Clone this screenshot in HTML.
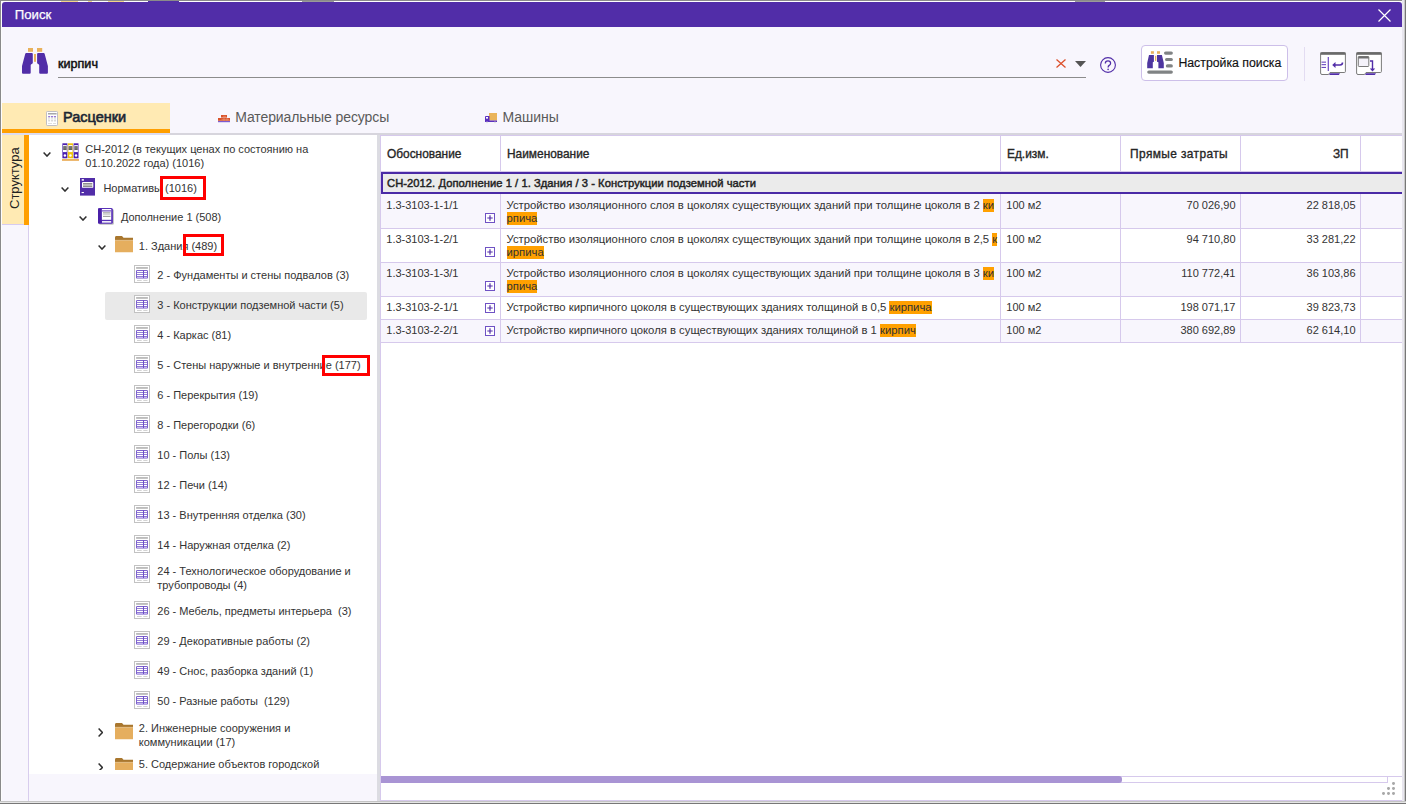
<!DOCTYPE html>
<html><head><meta charset="utf-8">
<style>
*{box-sizing:border-box;margin:0;padding:0}
html,body{width:1406px;height:804px;overflow:hidden}
body{position:relative;background:#fdfdfd;font-family:"Liberation Sans",sans-serif;color:#222}
.a{position:absolute}
.t{position:absolute;white-space:nowrap;line-height:1}
svg{position:absolute;overflow:visible}
.tr{font-size:11px;color:#333}
.hd{font-size:11.9px;font-weight:normal;color:#262626;-webkit-text-stroke:0.35px #262626}
.cd{font-size:11px;color:#333}
.hl{background:#ffa000;padding-bottom:1px}
.rb{position:absolute;border:3px solid #ff0000}
.vl{position:absolute;width:1px;background:#d6c9ec}
</style></head><body>
<svg width="0" height="0" style="position:absolute">
<defs>
<symbol id="chev" viewBox="0 0 8 5"><path d="M0.6 0.6 L4 4.1 L7.4 0.6" fill="none" stroke="#2f2f2f" stroke-width="1.5"/></symbol>
<symbol id="chevr" viewBox="0 0 5 9"><path d="M0.6 0.6 L4.4 4.5 L0.6 8.4" fill="none" stroke="#2f2f2f" stroke-width="1.5"/></symbol>
<symbol id="leaf" viewBox="0 0 16 18">
 <rect x="0.5" y="0.5" width="15" height="17" fill="#fff" stroke="#c2c2c2"/>
 <rect x="2.1" y="2.2" width="11.8" height="1.5" fill="#ababab"/>
 <rect x="2.1" y="5" width="11.8" height="8.6" rx="1.2" fill="#6f50c8"/>
 <rect x="3" y="5.9" width="6" height="1.3" fill="#fff"/><rect x="10" y="5.9" width="3" height="1.3" fill="#fff"/>
 <rect x="3" y="7.9" width="6" height="1.3" fill="#fff"/><rect x="10" y="7.9" width="3" height="1.3" fill="#fff"/>
 <rect x="3" y="9.9" width="6" height="1.3" fill="#fff"/><rect x="10" y="9.9" width="3" height="1.3" fill="#fff"/>
 <rect x="3" y="11.9" width="6" height="1" fill="#cdbff0"/><rect x="10" y="11.9" width="3" height="1" fill="#cdbff0"/>
 <path d="M3 15.5H7.7M9.3 15.5H13.5" stroke="#c8c8c8" stroke-width="0.8"/>
</symbol>
<symbol id="folder" viewBox="0 0 18 17" preserveAspectRatio="none">
 <path d="M0 1.5 Q0 0 1.5 0 H7 L8.5 1.8 H18 V5 H0Z" fill="#a9772e"/>
 <rect x="0" y="4" width="18" height="1" fill="#e9c58e"/>
 <rect x="0" y="5" width="18" height="12" fill="#e5ae5e"/>
</symbol>
</defs></svg>

<div class="a" style="left:0;top:0;width:1406px;height:1px;background:#8a8a8a"></div>
<div class="a" style="left:0;top:0;width:1px;height:804px;background:#8a8a8a"></div>
<div class="a" style="left:2px;top:2px;width:1400px;height:799px;background:#f8f6fd"></div>
<div class="a" style="left:1402px;top:0;width:2px;height:804px;background:#e8e6ee"></div>
<div class="a" style="left:1404px;top:0;width:1px;height:804px;background:#c8c8c8"></div>
<div class="a" style="left:1405px;top:0;width:1px;height:804px;background:#777"></div>
<div class="a" style="left:0;top:801px;width:1406px;height:1px;background:#c4c4c4"></div>
<div class="a" style="left:0;top:802px;width:1406px;height:1px;background:#e6e6e6"></div>
<div class="a" style="left:0;top:803px;width:1406px;height:1px;background:#777"></div>
<div class="a" style="left:2px;top:1px;width:1400px;height:1px;background:#fff"></div>
<div class="a" style="left:61px;top:1px;width:17px;height:1px;background:#f2d38a"></div>
<div class="a" style="left:108px;top:1px;width:16px;height:1px;background:#f2d38a"></div>
<div class="a" style="left:148px;top:1px;width:31px;height:1px;background:#512da8"></div>
<div class="a" style="left:88px;top:1px;width:4px;height:1px;background:#f2d38a"></div>
<div class="a" style="left:302px;top:1px;width:32px;height:1px;background:#9a9a9a"></div>
<div class="a" style="left:1075px;top:1px;width:30px;height:1px;background:#9a9a9a"></div>
<div class="a" style="left:2px;top:2px;width:1400px;height:25px;background:#512da8;border-radius:3px 3px 0 0"></div>
<div class="t" style="left:14.8px;top:8px;font-size:13.2px;color:#fff;-webkit-text-stroke:0.25px #fff">Поиск</div>
<svg style="left:1378px;top:9px" width="13" height="13"><path d="M0.5 0.5L12.5 12.5M12.5 0.5L0.5 12.5" stroke="#fff" stroke-width="1.2"/></svg>
<svg style="left:22px;top:48px" width="26" height="26" viewBox="0 0 26 26">
<rect x="6" y="0" width="5" height="3.8" fill="#e8b15c"/><rect x="15" y="0" width="5.2" height="3.8" fill="#e8b15c"/>
<rect x="12" y="6" width="2" height="7.8" fill="#e8b15c"/>
<path d="M4.2 5.1 H9.8 Q10.8 5.1 10.8 6.1 V14.8 Q10.8 15.8 9.8 16 Q8.7 16.3 8.7 17.3 V24.7 Q8.7 25.7 7.7 25.7 H1 Q0 25.7 0 24.7 V18 L3.2 6 Q3.4 5.1 4.2 5.1Z" fill="#512da8"/>
<path d="M21.7 5.1 H16.1 Q15.1 5.1 15.1 6.1 V14.8 Q15.1 15.8 16.1 16 Q17.2 16.3 17.2 17.3 V24.7 Q17.2 25.7 18.2 25.7 H24.9 Q25.9 25.7 25.9 24.7 V18 L22.7 6 Q22.5 5.1 21.7 5.1Z" fill="#512da8"/>
</svg>
<div class="t" style="left:58px;top:58.0px;font-size:12.6px;color:#111;-webkit-text-stroke:0.5px #111">кирпич</div>
<div class="a" style="left:58px;top:77px;width:1028px;height:1px;background:#8c8c8c"></div>
<svg style="left:1056px;top:58.5px" width="10" height="9"><path d="M0.5 0.5L9.5 8.5M9.5 0.5L0.5 8.5" stroke="#dc4f2a" stroke-width="1.3"/></svg>
<svg style="left:1075px;top:61px" width="11" height="6"><path d="M0 0H11L5.5 6Z" fill="#555"/></svg>
<svg style="left:1100px;top:57px" width="16" height="16"><circle cx="8" cy="8" r="7.4" fill="none" stroke="#512da8" stroke-width="1.1"/><path d="M5.3 6.4 Q5.3 3.9 8 3.9 Q10.6 3.9 10.6 6.2 Q10.6 7.5 9.2 8.4 Q8.1 9.1 8.1 10.6" fill="none" stroke="#512da8" stroke-width="1.25"/><circle cx="8.1" cy="12.4" r="0.8" fill="#512da8"/></svg>
<div class="a" style="left:1141px;top:45px;width:147px;height:36px;background:#fff;border:1px solid #cdbfe9;border-radius:4px"></div>
<svg style="left:1147px;top:51px" width="26" height="23" viewBox="0 0 26 23">
<rect x="3.9" y="0.2" width="3" height="2.6" fill="#e8b15c"/><rect x="10" y="0.2" width="3" height="2.6" fill="#e8b15c"/>
<rect x="8" y="4.8" width="1.3" height="5.1" fill="#e8b15c"/>
<path d="M2 3.9 H6.9 V10.8 L5.8 11.3 V17.3 H0.2 V12Z" fill="#4e369f"/>
<path d="M10 3.9 H14.9 L16.8 12 V17.3 H11.4 V11.3 L10 10.8Z" fill="#4e369f"/>
<rect x="17" y="0.5" width="8.9" height="3.2" rx="1.6" fill="#808384"/>
<rect x="18" y="6.9" width="7.9" height="3.1" rx="1.55" fill="#808384"/>
<rect x="18.8" y="13.2" width="7.1" height="3.4" rx="1.7" fill="#808384"/>
<rect x="0.2" y="19.4" width="25.7" height="3.3" rx="1.65" fill="#808384"/>
</svg>
<div class="t" style="left:1178.4px;top:56.8px;font-size:12.3px;color:#111;-webkit-text-stroke:0.15px #111">Настройка поиска</div>
<div class="a" style="left:1304px;top:47px;width:1px;height:34px;background:#e3dcf2"></div>
<svg style="left:1320px;top:52px" width="26" height="24" viewBox="0 0 26 24">
<path d="M0.6 1.5 Q0.6 0.5 1.6 0.5 H24.4 Q25.4 0.5 25.4 1.5 V19.5 Q25.4 20.5 24.4 20.5 H10 L8.5 22.5 H2 Q0.6 22.5 0.6 21 Z" fill="#fff" stroke="#7a7a7a" stroke-width="1"/>
<rect x="0.5" y="0.5" width="25" height="2.3" fill="#6a6a6a"/>
<path d="M10 21.3 H20 L18.8 23 H9.2Z" fill="#512da8"/>
<rect x="1.5" y="9.6" width="4.5" height="1.1" fill="#6a48c0"/><rect x="1.5" y="12.1" width="4.5" height="1.1" fill="#6a48c0"/><rect x="1.5" y="14.9" width="4.5" height="1.1" fill="#6a48c0"/><path d="M8.3 5V19" stroke="#6a48c0" stroke-width="1.2"/><path d="M22.5 10.5 Q22.5 13 20 13 H14" fill="none" stroke="#512da8" stroke-width="1.6"/><path d="M12.2 13 L15.5 10 V16Z" fill="#512da8"/></svg>
<svg style="left:1356px;top:52px" width="26" height="24" viewBox="0 0 26 24">
<path d="M0.6 1.5 Q0.6 0.5 1.6 0.5 H24.4 Q25.4 0.5 25.4 1.5 V19.5 Q25.4 20.5 24.4 20.5 H10 L8.5 22.5 H2 Q0.6 22.5 0.6 21 Z" fill="#fff" stroke="#7a7a7a" stroke-width="1"/>
<rect x="0.5" y="0.5" width="25" height="2.3" fill="#6a6a6a"/>
<path d="M10 21.3 H20 L18.8 23 H9.2Z" fill="#512da8"/>
<rect x="2.3" y="4.5" width="10.5" height="10" rx="0.8" fill="#f4f2fa" stroke="#7a7a7a" stroke-width="1"/><rect x="2.3" y="4.5" width="10.5" height="2" fill="#6f6f6f"/><path d="M14 9 H16.5 V17.5" fill="none" stroke="#512da8" stroke-width="1.4"/><path d="M13.8 16.5 H19.2 L16.5 19.5Z" fill="#512da8"/></svg>
<div class="a" style="left:2px;top:103px;width:168px;height:26px;background:#ffeab3"></div>
<div class="a" style="left:2px;top:129px;width:168px;height:4px;background:#ff9f00"></div>
<div class="a" style="left:2px;top:133px;width:1400px;height:2px;background:#d7d5dd"></div>
<div class="a" style="left:2px;top:133px;width:168px;height:2px;background:#dcdcf0"></div>
<svg style="left:46px;top:111px" width="12" height="15" viewBox="0 0 12 15">
<rect x="0.5" y="0.5" width="11" height="14" rx="0.8" fill="#fff" stroke="#b9b9c2" stroke-width="0.9"/>
<rect x="2" y="2" width="8.6" height="1.5" fill="#a8a8a8"/>
<rect x="2.2" y="5" width="1.9" height="5.5" fill="#d9d9d9"/><rect x="5" y="5" width="2" height="5.5" fill="#d9d9d9"/><rect x="7.9" y="5" width="2.1" height="5.5" fill="#d9d9d9"/>
<rect x="2.2" y="5" width="1.9" height="1.1" fill="#9a78dc"/><rect x="5" y="5" width="2" height="1.1" fill="#9a78dc"/><rect x="7.9" y="5" width="2.1" height="1.1" fill="#9a78dc"/>
<rect x="2.7" y="7.3" width="0.9" height="1.6" fill="#fff"/><rect x="5.4" y="7.3" width="1.2" height="1.6" fill="#fff"/><rect x="8.4" y="7.3" width="1.1" height="1.6" fill="#fff"/>
<path d="M2 12.5H6M7 12.5H10" stroke="#d0d0d0" stroke-width="0.7"/>
</svg>
<div class="t" style="left:63px;top:110.1px;font-size:14.5px;color:#1b2634;-webkit-text-stroke:0.6px #1b2634">Расценки</div>
<svg style="left:218px;top:115px" width="12" height="7" viewBox="0 0 12 7">
<rect x="3" y="0" width="6" height="2.6" fill="#d9532b"/>
<rect x="0" y="3" width="12" height="2.8" fill="#d9532b"/>
<path d="M3.5 4.4H11M6 3V5.8M9 3V5.8M5 1.3H8" stroke="#f0a080" stroke-width="0.5"/>
<rect x="0" y="6" width="12" height="1.2" fill="#7d5cd0"/>
</svg>
<div class="t" style="left:235.2px;top:109.6px;font-size:14px;color:#5a5a5a;letter-spacing:-0.1px">Материальные ресурсы</div>
<svg style="left:485px;top:113px" width="12" height="10" viewBox="0 0 12 10">
<rect x="4" y="0" width="8" height="7.5" fill="#eab45a"/>
<path d="M0 4 Q0 3 1 3 H4.5 V8.5 H0Z" fill="#5a2fc0"/>
<rect x="1" y="4" width="2" height="1.6" fill="#fff"/>
<rect x="0" y="7.5" width="12" height="1.5" fill="#5a2fc0"/>
<circle cx="2" cy="9.3" r="0.9" fill="#ddd"/><circle cx="10" cy="9.3" r="0.9" fill="#ddd"/>
</svg>
<div class="t" style="left:502.4px;top:109.6px;font-size:14px;color:#5a5a5a">Машины</div>
<div class="a" style="left:2px;top:135px;width:22px;height:89px;background:#ffeab3"></div>
<div class="a" style="left:24px;top:135px;width:5px;height:90px;background:#ff9f00"></div>
<div class="a" style="left:2px;top:224px;width:22px;height:1px;background:#d6cbf0"></div>
<div class="t" style="left:7.8px;top:208.5px;font-size:13px;color:#222;transform:rotate(-90deg);transform-origin:0 0">Структура</div>
<div class="a" style="left:28px;top:225px;width:1px;height:576px;background:#d8cdee"></div>
<div class="a" style="left:29px;top:135px;width:348px;height:639px;background:#fff"></div>
<div class="a" style="left:29px;top:135px;width:348px;height:635px;overflow:hidden" id="tree">
<div class="a" style="left:76px;top:157px;width:262px;height:28px;background:#e9e9e9;border-radius:2px"></div>
<svg style="left:14.2px;top:17.2px" width="8" height="5"><use href="#chev"/></svg>
<svg style="left:32.6px;top:7.7px" width="17" height="18" viewBox="0 0 17 18">
<rect x="0.4" y="0.3" width="5.0" height="15" fill="#4a1fb0"/>
<rect x="1.0" y="2.1" width="3.8" height="7" fill="#fff"/>
<rect x="1.2" y="3.2" width="3.4" height="3.8" fill="#555"/>
<path d="M1.2 4.4H4.6M1.2 5.8H4.6" stroke="#9a9a9a" stroke-width="0.5"/>
<circle cx="2.90" cy="12.6" r="1.25" fill="#fff"/>
<rect x="5.8" y="0.3" width="5.3" height="15" fill="#eec20e"/>
<rect x="6.4" y="2.1" width="4.1" height="7" fill="#fff"/>
<rect x="6.6" y="3.2" width="3.7" height="3.8" fill="#555"/>
<path d="M6.6 4.4H10.3M6.6 5.8H10.3" stroke="#9a9a9a" stroke-width="0.5"/>
<circle cx="8.45" cy="12.6" r="1.25" fill="#fff"/>
<rect x="11.6" y="0.3" width="4.9" height="15" fill="#4a1fb0"/>
<rect x="12.2" y="2.1" width="3.7" height="7" fill="#fff"/>
<rect x="12.4" y="3.2" width="3.3" height="3.8" fill="#555"/>
<path d="M12.4 4.4H15.7M12.4 5.8H15.7" stroke="#9a9a9a" stroke-width="0.5"/>
<circle cx="14.05" cy="12.6" r="1.25" fill="#fff"/>
<rect x="0" y="16" width="17" height="1.9" fill="#ebb262"/>
</svg>
<div class="t tr" style="left:56.3px;top:9.1px">СН-2012 (в текущих ценах по состоянию на</div>
<div class="t tr" style="left:56.3px;top:22.9px">01.10.2022 года) (1016)</div>
<svg style="left:32.4px;top:52.0px" width="8" height="5"><use href="#chev"/></svg>
<svg style="left:51.1px;top:43px" width="15" height="18" viewBox="0 0 15 18">
<rect x="0" y="0" width="15" height="17.6" fill="#512da8"/>
<rect x="2" y="4.1" width="11.3" height="5.7" rx="0.9" fill="#fff"/>
<rect x="3" y="5" width="9.3" height="1.6" fill="#8f8f8f"/><rect x="3" y="7.4" width="9.3" height="1.6" fill="#8f8f8f"/>
<rect x="1.7" y="1" width="2.2" height="1.8" fill="#e8e2f6"/><rect x="1.6" y="14" width="2.3" height="1.1" fill="#fff"/>
</svg>
<div class="t tr" style="left:74.4px;top:48.0px">Нормативы (1016)</div>
<svg style="left:50.4px;top:80.8px" width="8" height="5"><use href="#chev"/></svg>
<svg style="left:69px;top:72.9px" width="16" height="17" viewBox="0 0 16 17">
<rect x="1" y="1" width="14.9" height="15.8" rx="1.5" fill="#8a8a8a" opacity="0.55"/>
<rect x="0" y="0" width="14.9" height="15.8" rx="1.5" fill="#5a33b8"/>
<rect x="0" y="0.5" width="3.6" height="14.8" fill="#4a20a8"/>
<rect x="3.9" y="1" width="9.3" height="10.8" fill="#fff"/>
<rect x="3.9" y="2.1" width="9.3" height="1.5" fill="#8f74d0"/>
<rect x="5" y="4.4" width="7.5" height="1" fill="#8a8a8a"/>
<rect x="5" y="6.3" width="7.5" height="0.8" fill="#c4c4c4"/>
<rect x="5" y="7.9" width="7.5" height="0.9" fill="#8a8a8a"/>
<rect x="4" y="13.1" width="9.2" height="1.5" fill="#fff"/>
</svg>
<div class="t tr" style="left:91.9px;top:76.6px">Дополнение 1 (508)</div>
<svg style="left:68.6px;top:109.8px" width="8" height="5"><use href="#chev"/></svg>
<svg style="left:86.0px;top:101.0px" width="18" height="16.5"><use href="#folder"/></svg>
<div class="t tr" style="left:109.8px;top:105.7px">1. Здания (489)</div>
<svg style="left:105.3px;top:130.0px" width="16" height="18"><use href="#leaf"/></svg>
<div class="t tr" style="left:128.3px;top:135.1px">2 - Фундаменты и стены подвалов (3)</div>
<svg style="left:105.3px;top:160.0px" width="16" height="18"><use href="#leaf"/></svg>
<div class="t tr" style="left:128.3px;top:165.0px">3 - Конструкции подземной части (5)</div>
<svg style="left:105.3px;top:190.0px" width="16" height="18"><use href="#leaf"/></svg>
<div class="t tr" style="left:128.3px;top:195.0px">4 - Каркас (81)</div>
<svg style="left:105.3px;top:220.0px" width="16" height="18"><use href="#leaf"/></svg>
<div class="t tr" style="left:128.3px;top:225.0px">5 - Стены наружные и внутренние (177)</div>
<svg style="left:105.3px;top:250.0px" width="16" height="18"><use href="#leaf"/></svg>
<div class="t tr" style="left:128.3px;top:255.0px">6 - Перекрытия (19)</div>
<svg style="left:105.3px;top:280.0px" width="16" height="18"><use href="#leaf"/></svg>
<div class="t tr" style="left:128.3px;top:285.0px">8 - Перегородки (6)</div>
<svg style="left:105.3px;top:310.0px" width="16" height="18"><use href="#leaf"/></svg>
<div class="t tr" style="left:128.3px;top:315.0px">10 - Полы (13)</div>
<svg style="left:105.3px;top:340.0px" width="16" height="18"><use href="#leaf"/></svg>
<div class="t tr" style="left:128.3px;top:345.0px">12 - Печи (14)</div>
<svg style="left:105.3px;top:370.0px" width="16" height="18"><use href="#leaf"/></svg>
<div class="t tr" style="left:128.3px;top:375.0px">13 - Внутренняя отделка (30)</div>
<svg style="left:105.3px;top:400.0px" width="16" height="18"><use href="#leaf"/></svg>
<div class="t tr" style="left:128.3px;top:405.0px">14 - Наружная отделка (2)</div>
<svg style="left:105.3px;top:430.0px" width="16" height="18"><use href="#leaf"/></svg>
<div class="t tr" style="left:128.3px;top:431.0px">24 - Технологическое оборудование и</div>
<svg style="left:105.3px;top:466.0px" width="16" height="18"><use href="#leaf"/></svg>
<div class="t tr" style="left:128.3px;top:471.0px">26 - Мебель, предметы интерьера&nbsp; (3)</div>
<svg style="left:105.3px;top:496.0px" width="16" height="18"><use href="#leaf"/></svg>
<div class="t tr" style="left:128.3px;top:501.0px">29 - Декоративные работы (2)</div>
<svg style="left:105.3px;top:526.0px" width="16" height="18"><use href="#leaf"/></svg>
<div class="t tr" style="left:128.3px;top:531.0px">49 - Снос, разборка зданий (1)</div>
<svg style="left:105.3px;top:556.0px" width="16" height="18"><use href="#leaf"/></svg>
<div class="t tr" style="left:128.3px;top:561.0px">50 - Разные работы&nbsp; (129)</div>
<div class="t tr" style="left:128.3px;top:445.0px">трубопроводы (4)</div>
<svg style="left:68.8px;top:593.2px" width="5" height="9"><use href="#chevr"/></svg>
<svg style="left:86.0px;top:587.5px" width="18" height="16.5"><use href="#folder"/></svg>
<div class="t tr" style="left:109.8px;top:587.7px">2. Инженерные сооружения и</div>
<div class="t tr" style="left:109.8px;top:601.7px">коммуникации (17)</div>
<svg style="left:68.8px;top:628.3px" width="5" height="9"><use href="#chevr"/></svg>
<svg style="left:86.0px;top:623.4px" width="18" height="16.5"><use href="#folder"/></svg>
<div class="t tr" style="left:109.8px;top:623.7px">5. Содержание объектов городской</div>
</div>
<div class="rb" style="left:160.3px;top:176.3px;width:46.1px;height:23.9px"></div>
<div class="rb" style="left:183.4px;top:234.4px;width:41px;height:21.9px"></div>
<div class="rb" style="left:321.5px;top:354.5px;width:48.9px;height:21.5px"></div>
<div class="a" style="left:377px;top:135px;width:3px;height:666px;background:#dcdce2"></div>
<div class="a" style="left:380px;top:135px;width:1022px;height:666px;background:#fff;border-left:1px solid #d6c9ec;border-top:1px solid #d6c9ec;border-bottom:1px solid #d6c9ec"></div>
<div class="a" style="left:381px;top:171px;width:1021px;height:1px;background:#d6c9ec"></div>
<div class="vl" style="left:500px;top:136px;height:35px"></div>
<div class="vl" style="left:1000px;top:136px;height:35px"></div>
<div class="vl" style="left:1120px;top:136px;height:35px"></div>
<div class="vl" style="left:1240px;top:136px;height:35px"></div>
<div class="vl" style="left:1360px;top:136px;height:35px"></div>
<div class="t hd" style="left:387px;top:148.9px">Обоснование</div>
<div class="t hd" style="left:507px;top:148.9px">Наименование</div>
<div class="t hd" style="left:1007px;top:148.9px">Ед.изм.</div>
<div class="t hd" style="right:178px;top:148.9px"><span style="letter-spacing:0.4px">Прямые затраты</span></div>
<div class="t hd" style="right:57.40000000000009px;top:148.9px">ЗП</div>
<div class="a" style="left:381px;top:172px;width:1021px;height:22px;background:#ebebeb;border:2px solid #4a2aa6;border-right:none"></div>
<div class="t" style="left:387px;top:177.8px;font-size:11.2px;color:#1f1f1f;-webkit-text-stroke:0.45px #1f1f1f;letter-spacing:0.05px">СН-2012. Дополнение 1 / 1. Здания / 3 - Конструкции подземной части</div>
<div class="a" style="left:381px;top:194px;width:1021px;height:34px;background:#f8f6fd"></div>
<div class="vl" style="left:500px;top:194px;height:34px"></div>
<div class="vl" style="left:1000px;top:194px;height:34px"></div>
<div class="vl" style="left:1120px;top:194px;height:34px"></div>
<div class="vl" style="left:1240px;top:194px;height:34px"></div>
<div class="vl" style="left:1360px;top:194px;height:34px"></div>
<div class="t cd" style="left:386.3px;top:200.0px">1.3-3103-1-1/1</div>
<svg style="left:485px;top:212.5px" width="10" height="10"><rect x="0.5" y="0.5" width="9" height="9" fill="#fff" stroke="#6f52c4"/><path d="M2.3 5H7.7M5 2.3V7.7" stroke="#512da8" stroke-width="1.2"/></svg>
<div class="t cd" style="left:506.5px;top:200.0px;font-size:11.3px">Устройство изоляционного слоя в цоколях существующих зданий при толщине цоколя в 2 <span class="hl">ки</span></div>
<div class="t cd" style="left:506.5px;top:213.3px;font-size:11.3px"><span class="hl">рпича</span></div>
<div class="t cd" style="left:1006.3px;top:200.0px">100 м2</div>
<div class="t cd" style="right:170.5px;top:200.0px">70 026,90</div>
<div class="t cd" style="right:50.5px;top:200.0px">22 818,05</div>
<div class="a" style="left:381px;top:228px;width:1021px;height:34px;background:#fff"></div>
<div class="vl" style="left:500px;top:228px;height:34px"></div>
<div class="vl" style="left:1000px;top:228px;height:34px"></div>
<div class="vl" style="left:1120px;top:228px;height:34px"></div>
<div class="vl" style="left:1240px;top:228px;height:34px"></div>
<div class="vl" style="left:1360px;top:228px;height:34px"></div>
<div class="t cd" style="left:386.3px;top:234.0px">1.3-3103-1-2/1</div>
<svg style="left:485px;top:246.5px" width="10" height="10"><rect x="0.5" y="0.5" width="9" height="9" fill="#fff" stroke="#6f52c4"/><path d="M2.3 5H7.7M5 2.3V7.7" stroke="#512da8" stroke-width="1.2"/></svg>
<div class="t cd" style="left:506.5px;top:234.0px;font-size:11.3px">Устройство изоляционного слоя в цоколях существующих зданий при толщине цоколя в 2,5 <span class="hl">к</span></div>
<div class="t cd" style="left:506.5px;top:247.3px;font-size:11.3px"><span class="hl">ирпича</span></div>
<div class="t cd" style="left:1006.3px;top:234.0px">100 м2</div>
<div class="t cd" style="right:170.5px;top:234.0px">94 710,80</div>
<div class="t cd" style="right:50.5px;top:234.0px">33 281,22</div>
<div class="a" style="left:381px;top:262px;width:1021px;height:34px;background:#f8f6fd"></div>
<div class="vl" style="left:500px;top:262px;height:34px"></div>
<div class="vl" style="left:1000px;top:262px;height:34px"></div>
<div class="vl" style="left:1120px;top:262px;height:34px"></div>
<div class="vl" style="left:1240px;top:262px;height:34px"></div>
<div class="vl" style="left:1360px;top:262px;height:34px"></div>
<div class="t cd" style="left:386.3px;top:268.0px">1.3-3103-1-3/1</div>
<svg style="left:485px;top:280.5px" width="10" height="10"><rect x="0.5" y="0.5" width="9" height="9" fill="#fff" stroke="#6f52c4"/><path d="M2.3 5H7.7M5 2.3V7.7" stroke="#512da8" stroke-width="1.2"/></svg>
<div class="t cd" style="left:506.5px;top:268.0px;font-size:11.3px">Устройство изоляционного слоя в цоколях существующих зданий при толщине цоколя в 3 <span class="hl">ки</span></div>
<div class="t cd" style="left:506.5px;top:281.3px;font-size:11.3px"><span class="hl">рпича</span></div>
<div class="t cd" style="left:1006.3px;top:268.0px">100 м2</div>
<div class="t cd" style="right:170.5px;top:268.0px">110 772,41</div>
<div class="t cd" style="right:50.5px;top:268.0px">36 103,86</div>
<div class="a" style="left:381px;top:296px;width:1021px;height:23px;background:#fff"></div>
<div class="vl" style="left:500px;top:296px;height:23px"></div>
<div class="vl" style="left:1000px;top:296px;height:23px"></div>
<div class="vl" style="left:1120px;top:296px;height:23px"></div>
<div class="vl" style="left:1240px;top:296px;height:23px"></div>
<div class="vl" style="left:1360px;top:296px;height:23px"></div>
<div class="t cd" style="left:386.3px;top:302.0px">1.3-3103-2-1/1</div>
<svg style="left:485px;top:303px" width="10" height="10"><rect x="0.5" y="0.5" width="9" height="9" fill="#fff" stroke="#6f52c4"/><path d="M2.3 5H7.7M5 2.3V7.7" stroke="#512da8" stroke-width="1.2"/></svg>
<div class="t cd" style="left:506.5px;top:302.0px;font-size:11.3px">Устройство кирпичного цоколя в существующих зданиях толщиной в 0,5 <span class="hl">кирпича</span></div>
<div class="t cd" style="left:1006.3px;top:302.0px">100 м2</div>
<div class="t cd" style="right:170.5px;top:302.0px">198 071,17</div>
<div class="t cd" style="right:50.5px;top:302.0px">39 823,73</div>
<div class="a" style="left:381px;top:319px;width:1021px;height:23px;background:#f8f6fd"></div>
<div class="vl" style="left:500px;top:319px;height:23px"></div>
<div class="vl" style="left:1000px;top:319px;height:23px"></div>
<div class="vl" style="left:1120px;top:319px;height:23px"></div>
<div class="vl" style="left:1240px;top:319px;height:23px"></div>
<div class="vl" style="left:1360px;top:319px;height:23px"></div>
<div class="t cd" style="left:386.3px;top:325.0px">1.3-3103-2-2/1</div>
<svg style="left:485px;top:326px" width="10" height="10"><rect x="0.5" y="0.5" width="9" height="9" fill="#fff" stroke="#6f52c4"/><path d="M2.3 5H7.7M5 2.3V7.7" stroke="#512da8" stroke-width="1.2"/></svg>
<div class="t cd" style="left:506.5px;top:325.0px;font-size:11.3px">Устройство кирпичного цоколя в существующих зданиях толщиной в 1 <span class="hl">кирпич</span></div>
<div class="t cd" style="left:1006.3px;top:325.0px">100 м2</div>
<div class="t cd" style="right:170.5px;top:325.0px">380 692,89</div>
<div class="t cd" style="right:50.5px;top:325.0px">62 614,10</div>
<div class="a" style="left:381px;top:228px;width:1021px;height:1px;background:#d6c9ec"></div>
<div class="a" style="left:381px;top:262px;width:1021px;height:1px;background:#d6c9ec"></div>
<div class="a" style="left:381px;top:296px;width:1021px;height:1px;background:#d6c9ec"></div>
<div class="a" style="left:381px;top:319px;width:1021px;height:1px;background:#d6c9ec"></div>
<div class="a" style="left:381px;top:342px;width:1021px;height:1px;background:#d6c9ec"></div>
<div class="a" style="left:381px;top:776px;width:1021px;height:1px;background:#d6c9ec"></div>
<div class="a" style="left:381px;top:776px;width:1007px;height:7px;border:1px solid #d6c9ec;border-top:none;border-left:none"></div>
<div class="a" style="left:381px;top:776px;width:741px;height:6.5px;background:#a994d4;border-radius:0 3px 3px 0"></div>
<div class="a" style="left:1392.0px;top:782.1px;width:2.8px;height:2.8px;border-radius:50%;background:#a8a8a8"></div>
<div class="a" style="left:1387.0px;top:787.1px;width:2.8px;height:2.8px;border-radius:50%;background:#a8a8a8"></div>
<div class="a" style="left:1392.0px;top:787.1px;width:2.8px;height:2.8px;border-radius:50%;background:#a8a8a8"></div>
<div class="a" style="left:1382.0px;top:792.1px;width:2.8px;height:2.8px;border-radius:50%;background:#a8a8a8"></div>
<div class="a" style="left:1387.0px;top:792.1px;width:2.8px;height:2.8px;border-radius:50%;background:#a8a8a8"></div>
<div class="a" style="left:1392.0px;top:792.1px;width:2.8px;height:2.8px;border-radius:50%;background:#a8a8a8"></div>
</body></html>
